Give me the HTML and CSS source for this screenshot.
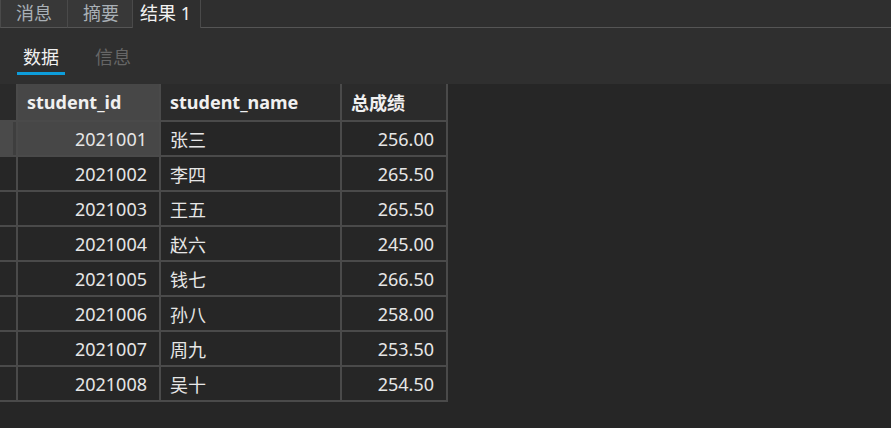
FILE: index.html
```html
<!DOCTYPE html>
<html>
<head>
<meta charset="utf-8">
<link rel="stylesheet" href="styles.css">
</head>
<body>
<div class="app">
  <div class="tabbar">
    <div class="tab">消息</div>
    <div class="tab">摘要</div>
    <div class="tab active">结果 1</div>
    <div class="tabfill"></div>
  </div>
  <div class="subtabs">
    <div class="subtab on">数据</div>
    <div class="subtab">信息</div>
  </div>
  <div class="grid">
    <table>
      <thead>
        <tr>
          <th class="rh"></th>
          <th class="c-id sel">student_id</th>
          <th class="c-name">student_name</th>
          <th class="c-score">总成绩</th>
        </tr>
      </thead>
      <tbody>
        <tr class="cur"><td class="rh"><span class="rhmark"></span></td><td class="num sel">2021001</td><td>张三</td><td class="num">256.00</td></tr>
        <tr><td class="rh"></td><td class="num">2021002</td><td>李四</td><td class="num">265.50</td></tr>
        <tr><td class="rh"></td><td class="num">2021003</td><td>王五</td><td class="num">265.50</td></tr>
        <tr><td class="rh"></td><td class="num">2021004</td><td>赵六</td><td class="num">245.00</td></tr>
        <tr><td class="rh"></td><td class="num">2021005</td><td>钱七</td><td class="num">266.50</td></tr>
        <tr><td class="rh"></td><td class="num">2021006</td><td>孙八</td><td class="num">258.00</td></tr>
        <tr><td class="rh"></td><td class="num">2021007</td><td>周九</td><td class="num">253.50</td></tr>
        <tr><td class="rh"></td><td class="num">2021008</td><td>吴十</td><td class="num">254.50</td></tr>
      </tbody>
    </table>
  </div>
</div>
</body>
</html>
```

FILE: styles.css
```css
html, body {
  margin: 0;
  padding: 0;
  background: #262626;
}
body {
  font-family: "Noto Sans", "Noto Sans CJK SC", sans-serif;
  font-size: 18px;
  color: #e8e8e8;
}
.app {
  width: 891px;
  height: 428px;
  display: flex;
  flex-direction: column;
  overflow: hidden;
}
.tabbar {
  display: flex;
  height: 28px;
  background: #2f2f2f;
}
.tab {
  height: 28px;
  box-sizing: border-box;
  padding: 0 0 2px 15px;
  display: flex;
  align-items: center;
  background: #383838;
  color: #a9b0b6;
  border-left: 1px solid #4a4a4a;
  border-bottom: 1px solid #555;
  line-height: 1;
  white-space: nowrap;
  flex: none;
}
.tab:first-child { width: 67px; }
.tab:nth-child(2) { width: 65px; }
.tab.active {
  width: 69px;
  background: #2f2f2f;
  color: #f2f2f2;
  border-left: 1px solid #4a4a4a;
  border-right: 1px solid #4a4a4a;
  border-bottom: none;
  padding-left: 7px;
}
.tabfill {
  flex: 1;
  border-bottom: 1px solid #555;
}
.subtabs {
  height: 56px;
  background: #2f2f2f;
  display: flex;
  padding-left: 17px;
  box-sizing: border-box;
  gap: 24px;
}
.subtab {
  margin-top: 15px;
  height: 29px;
  padding: 0 6px;
  color: #666;
  line-height: 28px;
  border-bottom: 3px solid transparent;
  white-space: nowrap;
}
.subtab.on {
  color: #f0f0f0;
  border-bottom-color: #0d9ddb;
}
.grid {
  flex: 1;
  background: #262626;
}
table {
  border-collapse: separate;
  border-spacing: 0;
  table-layout: fixed;
  width: 448px;
}
th, td {
  border-right: 2px solid #4a4a4a;
  border-bottom: 2px solid #4a4a4a;
  padding: 0 9px;
  text-align: left;
  white-space: nowrap;
  overflow: hidden;
  box-sizing: border-box;
}
th {
  height: 38px;
  font-weight: bold;
  background: #2b2b2b;
  color: #f0f0f0;
}
td {
  height: 35px;
  color: #e6e6e6;
}
th.rh, td.rh {
  width: 18px;
  padding: 0;
  background: #262626;
}
th.rh { background: #2a2a2a; }
.c-id { width: 143px; }
.c-name { width: 181px; }
.c-score { width: 106px; }
td.num {
  text-align: right;
  padding-right: 12px;
}
.sel {
  background: #474747;
}
th.sel { background: #474747; }
tr.cur td.rh {
  background: #3e3e3e;
}
.rhmark {
  display: block;
  width: 13px;
  height: 33px;
  background: #4a4a4a;
}
```
